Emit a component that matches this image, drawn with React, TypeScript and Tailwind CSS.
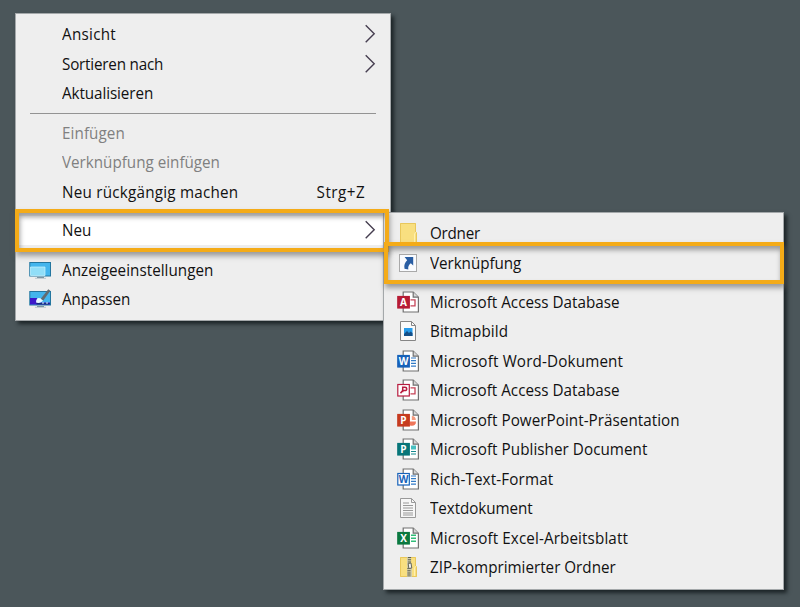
import type { ReactNode } from "react";

type Entry = {
  label: string;
  icon?: ReactNode;
  tracking?: string;
  muted?: boolean;
  arrow?: boolean;
  shortcut?: string;
};

function Chevron() {
  return (
    <svg width="12" height="20" viewBox="0 0 12 20" fill="none" stroke="#463e50" strokeWidth="1.4">
      <path d="M.7 1.2 9.2 9.7.7 18.2" />
    </svg>
  );
}

function Monitor({ brush = false }: { brush?: boolean }) {
  return (
    <svg width="24" height="22" viewBox="0 0 24 22">
      <rect x="1.8" y="3.5" width="20.7" height="13.5" fill="#43b5ed" stroke="#24769f" />
      {!brush && <path d="M2.5 8H17V16.5H2.5Z" fill="#91def8" stroke="#c9f3ff" strokeWidth=".7" />}
      <path d="M9 18.5H16" stroke="#6f8998" />
      <path d="M7 19.3H18" stroke="#bac5cc" />
      {brush && (
        <>
          <path d="M2 10h7v4.5h13v2H2Z" fill="#3c18c9" />
          <path d="M8.5 15.7h13" stroke="#172f7a" strokeWidth="1.5" />
          <path d="M14 15h2M18 15h2" stroke="#e4f8ff" />
          <path d="M8 14.5c0-4 2-5.5 5-4l2 2c-1.5 2-4 3-7 2Z" fill="#e8f8ff" />
          <path d="m12.8 10.8 7.5-9.5 2 1.5-7 9.7Z" fill="#626b70" />
        </>
      )}
    </svg>
  );
}

function Page() {
  return (
    <>
      <path d="M7.2 1h10l5.2 5.2V21H7.2Z" fill="#fff" stroke="#717171" strokeWidth="1.2" />
      <path d="M17.2 1v5.2h5.2" fill="#d8d8d8" stroke="#717171" strokeWidth="1.2" />
    </>
  );
}

function OfficeIcon({ color, letter, outline = false, kind }: { color: string; letter: string; outline?: boolean; kind: string }) {
  return (
    <svg width="24" height="22" viewBox="0 0 24 22">
      <Page />
      {kind === "access" && <path d="M14.5 8.8H19V14.8H14.5" fill="none" stroke="#c64458" strokeWidth="1.3" />}
      {kind === "lines" && <path d="M15 8h5M15 10.7h5M15 13.4h5M15 16.1h5" stroke="#327bc6" strokeWidth="1.2" />}
      {kind === "pie" && (
        <>
          <path d="M14 12.5h6c0 4-3 5-6 4Z" fill="#ef765a" />
          <path d="M15.8 11V7c3 0 4 2 4 4Z" fill="#f49a7e" />
        </>
      )}
      {kind === "publish" && (
        <>
          <path d="M15 7.5h5v4h-5Z" fill="#48bfc1" />
          <path d="M15 13.5h5M15 16h5" stroke="#15898e" strokeWidth="1.2" />
        </>
      )}
      {kind === "sheet" && <path d="M15 8.2h5M15 11.2h5M15 14.2h5" stroke="#31bd79" strokeWidth="1.5" />}
      <rect x="1.8" y="5.5" width="11.5" height="11.5" fill={outline ? "#fff" : color} stroke={color} strokeWidth="1.2" />
      {outline && letter === "P" ? (
        <path d="M4.5 14.2 7 11M6.7 13.2V8.2h2.2c2.4 0 2.4 3.4 0 3.4H6.7" fill="none" stroke={color} strokeWidth="1.5" />
      ) : (
        <text x="7.5" y="14.8" textAnchor="middle" fontFamily="Open Sans, sans-serif" fontWeight="700" fontSize="10" fill={outline ? color : "#fff"}>
          {letter}
        </text>
      )}
    </svg>
  );
}

function FolderIcon({ zip = false }: { zip?: boolean }) {
  return (
    <svg width="24" height="22" viewBox="0 0 24 22">
      <path d="M4 1h16v9l1 1v10H4Z" fill="#f8df80" />
      <path d="M4.5 1.5h15v9h1v10h-16Z" fill="none" stroke="#e8c75c" />
      <path d="M18.5 20V12l1.5-2" fill="none" stroke="#fff0ae" />
      {zip && (
        <>
          <path d="M11 1h4v7l1 4v9h-5V11Z" fill="#d1cba9" />
          <path d="M13.5 1v6M13 12v9" stroke="#5d604d" strokeWidth="3.2" strokeDasharray="1 1.2" />
          <path d="m12.2 7.5 2.8-.5.8 5-3 .5Z" fill="#eee" stroke="#666857" />
        </>
      )}
    </svg>
  );
}

function ShortcutIcon() {
  return (
    <svg width="24" height="22" viewBox="0 0 24 22">
      <rect x="3.5" y="2.5" width="17" height="17" fill="#f9fbfe" stroke="#a9a9a9" />
      <path d="M8.6 5h8.6v8.5l-2.4-2.2c-2.1 1.8-2.9 3.2-2.5 6.2l-3.8-.8c-.7-3.7.4-6.1 2.7-8.4Z" fill="#285da3" />
    </svg>
  );
}

function BitmapIcon() {
  return (
    <svg width="24" height="22" viewBox="0 0 24 22">
      <path d="M4.5 1.5h11l4 4v15h-15Z" fill="#fafafa" stroke="#858585" />
      <path d="M15.5 1.5v4h4" fill="none" stroke="#858585" />
      <rect x="8" y="8" width="8.5" height="8" fill="#279bea" />
      <path d="m8 14 3-3 2 2 1.5-1.5 2 1.5v3H8Z" fill="#144f88" />
    </svg>
  );
}

function TextIcon() {
  return (
    <svg width="24" height="22" viewBox="0 0 24 22">
      <path d="M4.5 1.5h11l4 4v15h-15Z" fill="#f7f7f7" stroke="#999" />
      <path d="M15.5 1.5v4h4M7 6h6M7 8.5h10M7 11h10M7 13.5h10M7 16h10M7 18h10" fill="none" stroke="#999" />
    </svg>
  );
}

function Row({ entry, sub = false }: { entry: Entry; sub?: boolean }) {
  return (
    <div className={`flex h-[29.5px] shrink-0 items-center ${sub ? "pl-[12px]" : "pl-[12px] pr-[13px]"}`}>
      <div className={`flex shrink-0 ${sub ? "w-[33.5px]" : "w-[34px]"}`}>{entry.icon}</div>
      <span className={`origin-left scale-x-95 whitespace-nowrap ${entry.muted ? "text-[#808080]" : ""} ${entry.tracking ?? ""}`}>
        {entry.label}
      </span>
      {entry.shortcut && <span className="mr-[12px] ml-auto origin-right scale-x-95 tracking-[0.55px]">{entry.shortcut}</span>}
      {entry.arrow && <span className="ml-auto"><Chevron /></span>}
    </div>
  );
}

const documents: Entry[] = [
  { label: "Microsoft Access Database", tracking: "tracking-[0.02px]", icon: <OfficeIcon color="#b71c35" letter="A" kind="access" /> },
  { label: "Bitmapbild", tracking: "tracking-[0.1px]", icon: <BitmapIcon /> },
  { label: "Microsoft Word-Dokument", tracking: "tracking-[0.17px]", icon: <OfficeIcon color="#1762b9" letter="W" kind="lines" /> },
  { label: "Microsoft Access Database", tracking: "tracking-[0.02px]", icon: <OfficeIcon color="#b71c3f" letter="P" kind="access" outline /> },
  { label: "Microsoft PowerPoint-Präsentation", tracking: "tracking-[0.05px]", icon: <OfficeIcon color="#c63b20" letter="P" kind="pie" /> },
  { label: "Microsoft Publisher Document", tracking: "tracking-[0.06px]", icon: <OfficeIcon color="#087679" letter="P" kind="publish" /> },
  { label: "Rich-Text-Format", tracking: "tracking-[0.15px]", icon: <OfficeIcon color="#1762b9" letter="W" kind="lines" outline /> },
  { label: "Textdokument", tracking: "tracking-[-0.08px]", icon: <TextIcon /> },
  { label: "Microsoft Excel-Arbeitsblatt", tracking: "tracking-[0.13px]", icon: <OfficeIcon color="#0b7940" letter="X" kind="sheet" /> },
  { label: "ZIP-komprimierter Ordner", icon: <FolderIcon zip /> },
];

export default function App() {
  return (
    <main className="relative h-[607px] w-[800px] overflow-hidden bg-[#4b565a] font-['Open_Sans','Noto_Sans',sans-serif] text-[16px] leading-[22px] text-[#111]">
      <section className="absolute top-[13px] left-[15px] flex h-[308px] w-[376px] flex-col border border-[#a4a8aa] bg-[#eee] pt-[5.5px] shadow-[3px_3px_4px_#1c2427]">
        <Row entry={{ label: "Ansicht", tracking: "tracking-[0.3px]", arrow: true }} />
        <Row entry={{ label: "Sortieren nach", tracking: "tracking-[-0.2px]", arrow: true }} />
        <Row entry={{ label: "Aktualisieren", tracking: "tracking-[-0.08px]" }} />
        <div className="mx-[14px] mt-[4.5px] mb-[4.5px] h-px shrink-0 bg-[#939393]" />
        <Row entry={{ label: "Einfügen", tracking: "tracking-[0.1px]", muted: true }} />
        <Row entry={{ label: "Verknüpfung einfügen", muted: true }} />
        <Row entry={{ label: "Neu rückgängig machen", tracking: "tracking-[0.25px]", shortcut: "Strg+Z" }} />
        <div className="mt-[9px] mb-[10px] bg-white">
          <Row entry={{ label: "Neu", arrow: true }} />
        </div>
        <Row entry={{ label: "Anzeigeeinstellungen", tracking: "tracking-[0.05px]", icon: <Monitor /> }} />
        <Row entry={{ label: "Anpassen", tracking: "tracking-[-0.12px]", icon: <Monitor brush /> }} />
      </section>

      <section className="absolute top-[212px] left-[383px] flex h-[378px] w-[401px] flex-col border border-[#a4a8aa] bg-[#eee] pt-[5.5px] shadow-[3px_3px_4px_#1c2427]">
        <Row sub entry={{ label: "Ordner", tracking: "tracking-[-0.25px]", icon: <FolderIcon /> }} />
        <Row sub entry={{ label: "Verknüpfung", tracking: "tracking-[-0.05px]", icon: <ShortcutIcon /> }} />
        <div className="h-[9.5px] shrink-0" />
        {documents.map((entry, index) => <Row key={index} sub entry={entry} />)}
      </section>

      <div className="pointer-events-none absolute top-[209px] left-[15px] h-[43px] w-[374px] border-4 border-[#f4ab18] shadow-[1px_4px_5px_#6669,inset_1px_4px_5px_#6669]" />
      <div className="pointer-events-none absolute top-[242px] left-[384px] h-[42px] w-[400px] border-4 border-[#f4ab18] shadow-[1px_4px_5px_#6669,inset_1px_4px_5px_#6669]" />
    </main>
  );
}
